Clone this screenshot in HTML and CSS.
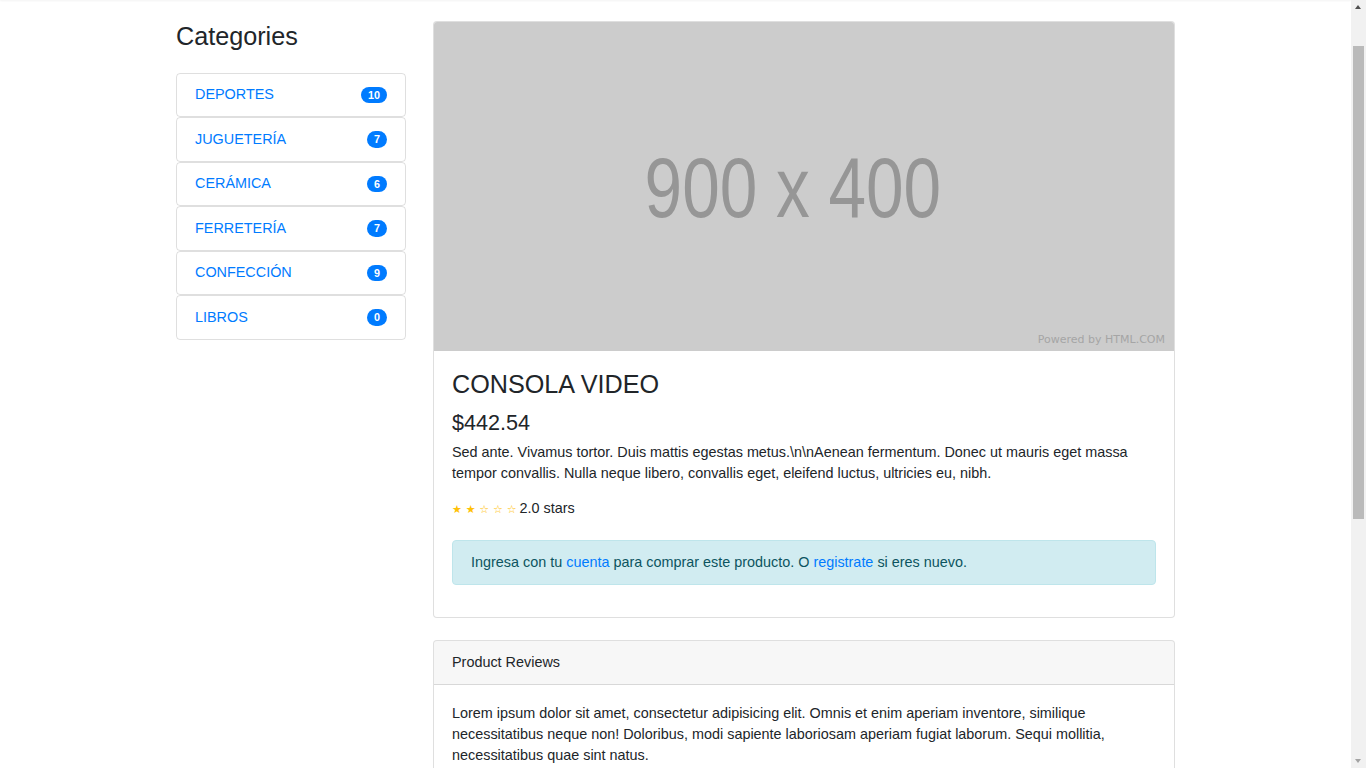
FILE: index.html
```html
<!DOCTYPE html>
<html lang="es">
<head>
<meta charset="utf-8">
<title>Consola Video</title>
<link rel="stylesheet" href="styles.css">
</head>
<body>
<nav class="topbar"></nav>
<div class="container">
  <div class="layout">
    <aside class="sidebar">
      <h1 class="side-title">Categories</h1>
      <div class="list">
        <a class="list-item" href="#">DEPORTES <span class="badge">10</span></a>
        <a class="list-item" href="#">JUGUETERÍA <span class="badge">7</span></a>
        <a class="list-item" href="#">CERÁMICA <span class="badge">6</span></a>
        <a class="list-item" href="#">FERRETERÍA <span class="badge">7</span></a>
        <a class="list-item" href="#">CONFECCIÓN <span class="badge">9</span></a>
        <a class="list-item" href="#">LIBROS <span class="badge">0</span></a>
      </div>
    </aside>
    <main class="content">
      <div class="card">
        <div class="placeholder">
          <span class="ph-text">900 x 400</span>
          <span class="ph-credit">Powered by HTML.COM</span>
        </div>
        <div class="card-body">
          <h3 class="card-title">CONSOLA VIDEO</h3>
          <h4 class="price">$442.54</h4>
          <p class="desc">Sed ante. Vivamus tortor. Duis mattis egestas metus.\n\nAenean fermentum. Donec ut mauris eget massa tempor convallis. Nulla neque libero, convallis eget, eleifend luctus, ultricies eu, nibh.</p>
          <div class="rating"><span class="stars"><span>★</span><span>★</span><span>☆</span><span>☆</span><span>☆</span></span>2.0 stars</div>
          <div class="alert">Ingresa con tu <a href="#">cuenta</a> para comprar este producto. O <a href="#">registrate</a> si eres nuevo.</div>
        </div>
      </div>
      <div class="card reviews">
        <div class="card-header">Product Reviews</div>
        <div class="card-body">
          <p class="review">Lorem ipsum dolor sit amet, consectetur adipisicing elit. Omnis et enim aperiam inventore, similique necessitatibus neque non! Doloribus, modi sapiente laboriosam aperiam fugiat laborum. Sequi mollitia, necessitatibus quae sint natus.</p>
          <small class="muted">Posted by Anonymous on 3/1/17</small>
          <hr class="rule">
          <p class="review">Lorem ipsum dolor sit amet, consectetur adipisicing elit. Omnis et enim aperiam inventore, similique necessitatibus neque non! Doloribus, modi sapiente laboriosam aperiam fugiat laborum. Sequi mollitia, necessitatibus quae sint natus.</p>
          <small class="muted">Posted by Anonymous on 3/1/17</small>
          <hr class="rule">
          <p class="review">Lorem ipsum dolor sit amet, consectetur adipisicing elit. Omnis et enim aperiam inventore, similique necessitatibus neque non! Doloribus, modi sapiente laboriosam aperiam fugiat laborum. Sequi mollitia, necessitatibus quae sint natus.</p>
          <small class="muted">Posted by Anonymous on 3/1/17</small>
          <hr class="rule">
          <a class="btn" href="#">Leave a Review</a>
        </div>
      </div>
    </main>
  </div>
</div>
<div class="scrollbar" aria-hidden="true">
  <span class="sb-arrow sb-up"></span>
  <span class="sb-thumb"></span>
  <span class="sb-arrow sb-down"></span>
</div>
<script src="script.js"></script>
</body>
</html>
```

FILE: styles.css
```css
html {
  scroll-behavior: auto;
}

body {
  margin: 0 15px 0 0;
  font-family: "Liberation Sans", Arial, sans-serif;
  font-size: 14.4px;
  line-height: 1.5;
  color: #212529;
  background: #fff;
}

a {
  color: #007bff;
  text-decoration: none;
}

.topbar {
  height: 50px;
  background: #fff;
  box-shadow: 0 1px 2px rgba(0, 0, 0, 0.05);
}

.container {
  width: 999px;
  margin: 21px auto 0;
}

.layout {
  display: grid;
  grid-template-columns: 229.5px 742px;
  column-gap: 27.5px;
  align-items: start;
}

.side-title {
  margin: 0 0 21.6px;
  font-size: 25.2px;
  font-weight: 500;
  line-height: 1.2;
}

.list {
  display: flex;
  flex-direction: column;
}

.list-item {
  display: flex;
  justify-content: space-between;
  align-items: center;
  height: 44.5px;
  box-sizing: border-box;
  padding: 0 18px;
  border: 1px solid rgba(0, 0, 0, 0.125);
  border-radius: 4px;
  font-size: 14.4px;
}

.badge {
  display: inline-block;
  padding: 2.7px 6.5px;
  font-size: 10.8px;
  font-weight: 700;
  line-height: 1;
  color: #fff;
  background: #007bff;
  border-radius: 10em;
}

.card {
  border: 1px solid rgba(0, 0, 0, 0.125);
  border-radius: 4px;
  overflow: hidden;
  background: #fff;
}

.placeholder {
  position: relative;
  height: 329px;
  background: #ccc;
  display: flex;
  align-items: center;
  justify-content: center;
}

.ph-text {
  display: inline-block;
  margin-right: 22px;
  font-family: "Liberation Sans", Arial, sans-serif;
  font-size: 86px;
  line-height: 1;
  color: #969696;
  transform: scaleX(0.785);
}

.ph-credit {
  position: absolute;
  right: 9px;
  bottom: 6px;
  font-family: "DejaVu Sans", sans-serif;
  font-size: 11px;
  line-height: 1;
  color: #a5a5a5;
}

.card-body {
  padding: 18px;
}

.card-title {
  margin: 0 0 10.8px;
  font-size: 25.2px;
  font-weight: 500;
  line-height: 1.2;
}

.price {
  margin: 0 0 6px;
  font-size: 21.6px;
  font-weight: 500;
  line-height: 1.2;
}

.desc {
  margin: 0 0 13px;
  line-height: 21.3px;
}

.rating {
  display: flex;
  align-items: baseline;
  margin-bottom: 21px;
}

.stars {
  display: inline-flex;
  gap: 3.8px;
  margin-right: 3px;
  color: #ffc107;
  font-family: "DejaVu Sans", sans-serif;
  font-size: 11px;
}

.alert {
  margin-bottom: 14.4px;
  padding: 10.4px 18px;
  color: #0c5460;
  background: #d1ecf1;
  border: 1px solid #bee5eb;
  border-radius: 4px;
}

.reviews {
  margin-top: 22px;
}

.card-header {
  padding: 10.8px 18px;
  background: rgba(0, 0, 0, 0.03);
  border-bottom: 1px solid rgba(0, 0, 0, 0.125);
}

.review {
  margin: 0 0 14.4px;
  line-height: 21px;
}

.muted {
  font-size: 80%;
  color: #6c757d;
}

.rule {
  margin: 14.4px 0;
  border: 0;
  border-top: 1px solid rgba(0, 0, 0, 0.1);
}

.btn {
  display: inline-block;
  padding: 5.4px 10.8px;
  color: #fff;
  background: #28a745;
  border: 1px solid #28a745;
  border-radius: 4px;
}

/* drawn window scrollbar (overlay on the right edge) */
.scrollbar {
  position: fixed;
  top: 0;
  right: 0;
  width: 15px;
  height: 100vh;
  background: #f1f1f1;
}

.sb-thumb {
  position: absolute;
  top: 46px;
  left: 2px;
  width: 11px;
  height: 473px;
  background: #bababa;
}

.sb-arrow {
  position: absolute;
  left: 4px;
  width: 0;
  height: 0;
  border-left: 3.5px solid transparent;
  border-right: 3.5px solid transparent;
}

.sb-up {
  top: 5px;
  border-bottom: 4px solid #505050;
}

.sb-down {
  bottom: 5px;
  border-top: 4px solid #a3a3a3;
}
```

FILE: script.js
```js
window.scrollTo(0, 50);
window.addEventListener('load', function () {
  window.scrollTo(0, 50);
});
```
